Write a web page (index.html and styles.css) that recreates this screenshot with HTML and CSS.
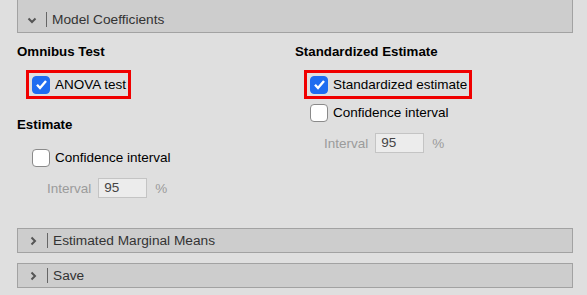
FILE: index.html
```html
<html>
<head>
  <link rel="stylesheet" href="styles.css">
</head>
<body>
  <div class="section open">
    <span class="chev"><svg width="10" height="8" viewBox="0 0 10 8"><path d="M1.5 2.5 L5 6 L8.5 2.5" fill="none" stroke="#555" stroke-width="2"/></svg></span>
    <span class="sep"></span>
    <span class="title">Model Coefficients</span>
  </div>

  <div class="options">
    <div class="col">
      <div class="group-title">Omnibus Test</div>
      <label class="row hl">
        <span class="box on"><svg width="13" height="11" viewBox="0 0 13 11"><path d="M2 5.8 L5 9 L11 2" fill="none" stroke="#fff" stroke-width="2.4"/></svg></span>
        ANOVA test
      </label>

      <div class="group-title second">Estimate</div>
      <label class="row">
        <span class="box"></span>
        Confidence interval
      </label>
      <div class="interval">
        <span class="lbl">Interval</span>
        <span class="field">95</span>
        <span class="pct">%</span>
      </div>
    </div>

    <div class="col">
      <div class="group-title">Standardized Estimate</div>
      <label class="row hl">
        <span class="box on"><svg width="13" height="11" viewBox="0 0 13 11"><path d="M2 5.8 L5 9 L11 2" fill="none" stroke="#fff" stroke-width="2.4"/></svg></span>
        Standardized estimate
      </label>
      <label class="row tight">
        <span class="box"></span>
        Confidence interval
      </label>
      <div class="interval right">
        <span class="lbl">Interval</span>
        <span class="field">95</span>
        <span class="pct">%</span>
      </div>
    </div>
  </div>

  <div class="section closed first">
    <span class="chev"><svg width="8" height="10" viewBox="0 0 8 10"><path d="M2.5 1.5 L6 5 L2.5 8.5" fill="none" stroke="#555" stroke-width="2"/></svg></span>
    <span class="sep"></span>
    <span class="title">Estimated Marginal Means</span>
  </div>
  <div class="section closed">
    <span class="chev"><svg width="8" height="10" viewBox="0 0 8 10"><path d="M2.5 1.5 L6 5 L2.5 8.5" fill="none" stroke="#555" stroke-width="2"/></svg></span>
    <span class="sep"></span>
    <span class="title">Save</span>
  </div>
</body>
</html>
```

FILE: styles.css
```css
body {
	margin: 0;
	background: #dfdfdf;
	font-family: "Liberation Sans", Arial, sans-serif;
	font-size: 13.5px;
	color: #000;
	overflow: hidden;
}

.section {
	display: flex;
	align-items: center;
	margin: 0 14px 0 17px;
	background: #cdcdcd;
	border: 1px solid #a2a2a2;
	color: #333;
	box-sizing: border-box;
	font-size: 13.7px;
}
.section.open {
	margin-top: -1px;
	height: 34px;
	padding-top: 7px;
}
.section.closed {
	height: 25px;
	margin-top: 10px;
}
.section.closed.first {
	margin-top: 30px;
}
.chev {
	width: 28px;
	display: flex;
	justify-content: center;
}
.section.closed .chev {
	padding-left: 1px;
}
.sep {
	width: 1px;
	height: 15px;
	background: #666;
	margin-right: 5px;
}

.options {
	display: grid;
	grid-template-columns: 278px 1fr;
	padding-left: 17px;
}
.group-title {
	font-weight: bold;
	font-size: 13.3px;
	line-height: 16px;
	margin-top: 11px;
	margin-bottom: 10px;
}
.group-title.second {
	margin-top: 18px;
	margin-bottom: 13px;
}
.row {
	display: flex;
	align-items: center;
	gap: 5px;
	height: 23px;
	padding-left: 15px;
}
.row.hl {
	display: inline-flex;
	margin-left: 9px;
	padding: 0 2px 0 3px;
	border: 3px solid #f00000;
}
.row.tight {
	height: 25px;
	margin-top: 1px;
}
.box {
	width: 16px;
	height: 16px;
	border: 1px solid #8a8a8a;
	border-radius: 4px;
	background: #fff;
	display: flex;
	align-items: center;
	justify-content: center;
}
.box.on {
	background: #1f6cf0;
	border-color: #1f6cf0;
}

.interval {
	display: flex;
	align-items: center;
	margin-top: 9px;
	padding-left: 30px;
	color: #9b9b9b;
}
.interval.right {
	padding-left: 29px;
	margin-top: 8px;
}
.lbl {
	margin-right: 7px;
}
.field {
	width: 49px;
	height: 20px;
	box-sizing: border-box;
	border: 1px solid #c4c4c4;
	background: #ececec;
	color: #444;
	padding-left: 5px;
	line-height: 18px;
	margin-right: 8px;
}
```
